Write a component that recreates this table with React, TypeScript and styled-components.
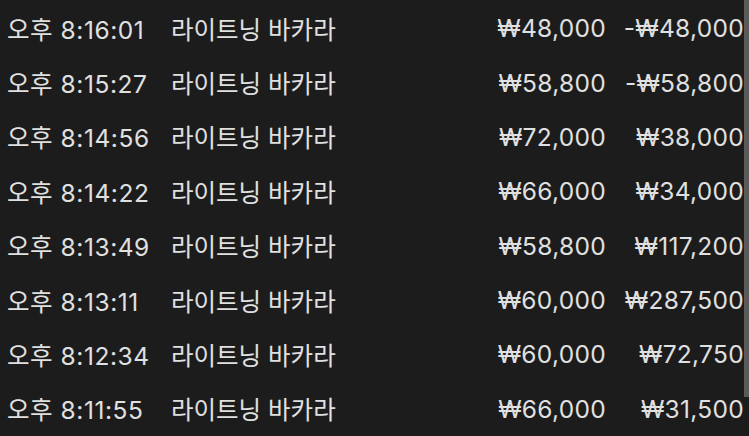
import React from 'react'
import styled, { createGlobalStyle } from 'styled-components'

const GlobalStyle = createGlobalStyle`
  html, body {
    margin: 0;
    padding: 0;
    background: #1c1c1c;
  }
`

const Screen = styled.div`
  width: 749px;
  height: 436px;
  display: flex;
  background: #1c1c1c;
  overflow: hidden;
  font-family: 'Inter', 'Noto Sans CJK KR', sans-serif;
  color: #e0e0e0;
`

const List = styled.div`
  flex: 1;
  display: flex;
  flex-direction: column;
  padding-top: 1px;
`

const Row = styled.div`
  display: grid;
  grid-template-columns: 164px 1fr auto 138px;
  align-items: center;
  height: 54.5px;
  padding-left: 7px;
  font-size: 24.5px;
  white-space: nowrap;
`

const Cell = styled.div<{ $right?: boolean; $spacing?: number }>`
  text-align: ${props => (props.$right ? 'right' : 'left')};
  letter-spacing: ${props => props.$spacing ?? 0}px;
`

const Track = styled.div`
  width: 5px;
  display: flex;
  flex-direction: column;
`

const Thumb = styled.div`
  height: 397px;
  background: #5a5a5a;
`

type Bet = { time: string; game: string; amount: string; result: string }

const bets: Bet[] = [
  { time: '오후 8:16:01', game: '라이트닝 바카라', amount: '₩48,000', result: '-₩48,000' },
  { time: '오후 8:15:27', game: '라이트닝 바카라', amount: '₩58,800', result: '-₩58,800' },
  { time: '오후 8:14:56', game: '라이트닝 바카라', amount: '₩72,000', result: '₩38,000' },
  { time: '오후 8:14:22', game: '라이트닝 바카라', amount: '₩66,000', result: '₩34,000' },
  { time: '오후 8:13:49', game: '라이트닝 바카라', amount: '₩58,800', result: '₩117,200' },
  { time: '오후 8:13:11', game: '라이트닝 바카라', amount: '₩60,000', result: '₩287,500' },
  { time: '오후 8:12:34', game: '라이트닝 바카라', amount: '₩60,000', result: '₩72,750' },
  { time: '오후 8:11:55', game: '라이트닝 바카라', amount: '₩66,000', result: '₩31,500' },
]

export default function App() {
  return (
    <>
      <GlobalStyle />
      <Screen>
        <List>
          {bets.map((bet, index) => (
            <Row key={`bet_${index}`}>
              <Cell $spacing={0.55}>{bet.time}</Cell>
              <Cell>{bet.game}</Cell>
              <Cell $right $spacing={0.3}>{bet.amount}</Cell>
              <Cell $right $spacing={0.3}>{bet.result}</Cell>
            </Row>
          ))}
        </List>
        <Track>
          <Thumb />
        </Track>
      </Screen>
    </>
  )
}
